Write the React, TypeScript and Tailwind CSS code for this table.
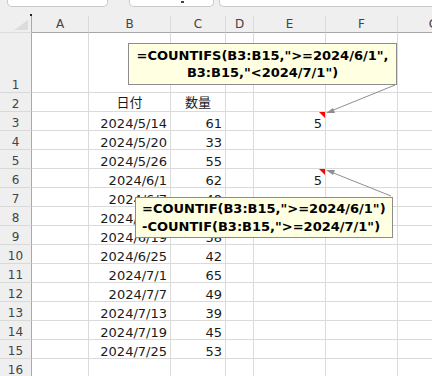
import React from "react";

type Row = { n: number; h: number; b?: string; c?: string; e?: string; hdr?: boolean };

const rows: Row[] = [
  { n: 1, h: 60 },
  { n: 2, h: 19, b: "日付", c: "数量", hdr: true },
  { n: 3, h: 19, b: "2024/5/14", c: "61", e: "5" },
  { n: 4, h: 19, b: "2024/5/20", c: "33" },
  { n: 5, h: 19, b: "2024/5/26", c: "55" },
  { n: 6, h: 19, b: "2024/6/1", c: "62", e: "5" },
  { n: 7, h: 19, b: "2024/6/7", c: "48" },
  { n: 8, h: 19, b: "2024/6/13", c: "51" },
  { n: 9, h: 19, b: "2024/6/19", c: "58" },
  { n: 10, h: 19, b: "2024/6/25", c: "42" },
  { n: 11, h: 19, b: "2024/7/1", c: "65" },
  { n: 12, h: 19, b: "2024/7/7", c: "49" },
  { n: 13, h: 19, b: "2024/7/13", c: "39" },
  { n: 14, h: 19, b: "2024/7/19", c: "45" },
  { n: 15, h: 19, b: "2024/7/25", c: "53" },
  { n: 16, h: 19 },
];

const letters = ["A", "B", "C", "D", "E", "F", "G"];

const cellFont = { fontFamily: '"DejaVu Sans", "Noto Sans CJK JP", sans-serif' };

function RedMark() {
  return (
    <svg className="absolute right-0 top-0" width="6" height="6" viewBox="0 0 6 6">
      <polygon points="0,0 6,0 6,6" fill="#ff0000" />
    </svg>
  );
}

export default function App() {
  return (
    <div
      className="relative w-[432px] h-[376px] overflow-hidden bg-[#efefef] text-[#1a1a1a]"
      style={cellFont}
    >
      {/* top toolbar strip */}
      <div className="h-[16px] flex items-start">
        <div className="ml-[7px] w-[101px] h-[7px] bg-white border border-t-0 border-[#c9c9c9] rounded-b-[5px]" />
        <div className="ml-[21px] w-[85px] h-[7px] bg-white border border-t-0 border-[#c9c9c9] rounded-b-[5px] flex justify-center">
          <div className="ml-[22px] mt-[1px] w-[3px] h-[2px] bg-[#444]" />
        </div>
        <div className="ml-[5px] flex-1 h-[7px] bg-white border border-t-0 border-r-0 border-[#c9c9c9] rounded-bl-[5px]" />
      </div>

      {/* sheet grid */}
      <div className="grid w-[470px] grid-cols-[32px_57px_82px_55px_28px_72px_72px_72px]">
        {/* column header row */}
        <div className="relative h-[17px] border-r border-b border-r-[#a9a9a9] border-b-[#dcdcdc] bg-[#efefef]">
          <svg className="absolute right-[3px] bottom-[2px]" width="14" height="10" viewBox="0 0 14 10">
            <polygon points="14,0 14,10 0,10" fill="#dcdcdc" />
          </svg>
          <div className="absolute right-[-1px] top-[-2px] w-[2px] h-[2px] bg-[#222]" />
        </div>
        {letters.map((l) => (
          <div
            key={l}
            className="h-[17px] flex items-center justify-center text-[12px] leading-[15px] text-[#444] border-b border-b-[#a6a6a6] border-r border-r-[#dadada] bg-[#efefef]"
          >
            {l}
          </div>
        ))}

        {rows.map((r) => (
          <React.Fragment key={r.n}>
            <div
              className="flex items-end justify-center text-[12px] leading-[13px] text-[#444] bg-[#efefef] border-r border-r-[#a9a9a9] border-b border-b-[#d9d9d9]"
              style={{ height: r.h }}
            >
              {r.n}
            </div>
            {/* A */}
            <div className="bg-white border-r border-b border-[#dadada]" style={{ height: r.h }} />
            {/* B */}
            <div
              className={
                "bg-white border-r border-b border-[#dadada] flex items-end text-[13px] leading-[13px] whitespace-nowrap " +
                (r.hdr ? "justify-center pb-[2px]" : "justify-end pr-[3px]")
              }
              style={{ height: r.h }}
            >
              {r.b}
            </div>
            {/* C */}
            <div
              className={
                "bg-white border-r border-b border-[#dadada] flex items-end text-[13px] leading-[13px] whitespace-nowrap " +
                (r.hdr ? "justify-center pb-[2px]" : "justify-end pr-[3px]")
              }
              style={{ height: r.h }}
            >
              {r.c}
            </div>
            {/* D */}
            <div className="bg-white border-r border-b border-[#dadada]" style={{ height: r.h }} />
            {/* E */}
            <div
              className="relative bg-white border-r border-b border-[#dadada] flex items-end justify-end pr-[3px] text-[13px] leading-[13px]"
              style={{ height: r.h }}
            >
              {r.e}
              {r.e ? <RedMark /> : null}
            </div>
            {/* F */}
            <div className="bg-white border-r border-b border-[#dadada]" style={{ height: r.h }} />
            {/* G */}
            <div className="bg-white border-r border-b border-[#dadada]" style={{ height: r.h }} />
          </React.Fragment>
        ))}
      </div>

      {/* arrows */}
      <svg className="absolute left-0 top-0 pointer-events-none" width="432" height="376" viewBox="0 0 432 376">
        <line x1="395" y1="85" x2="331" y2="111" stroke="#8f8f8f" strokeWidth="1" />
        <polygon points="326,113 333,108 335,113" fill="#8f8f8f" />
        <line x1="391" y1="196" x2="331" y2="172" stroke="#8f8f8f" strokeWidth="1" />
        <polygon points="326,170 335,170 333,175" fill="#8f8f8f" />
      </svg>

      {/* comment 1 */}
      <div
        className="absolute left-[128px] top-[43px] w-[269px] h-[42px] bg-[#ffffe1] border border-[#8c8c8c] pt-[3px] text-center text-[13px] leading-[17px] font-bold text-black whitespace-nowrap"
        style={cellFont}
      >
        <div>=COUNTIFS(B3:B15,"&gt;=2024/6/1",</div>
        <div>B3:B15,"&lt;2024/7/1")</div>
      </div>

      {/* comment 2 */}
      <div
        className="absolute left-[135px] top-[197px] w-[258px] h-[41px] bg-[#ffffe1] border border-[#8c8c8c] pt-[2px] pl-[6px] text-left text-[13px] leading-[18px] font-bold text-black whitespace-nowrap"
        style={cellFont}
      >
        <div>=COUNTIF(B3:B15,"&gt;=2024/6/1")</div>
        <div>-COUNTIF(B3:B15,"&gt;=2024/7/1")</div>
      </div>
    </div>
  );
}
